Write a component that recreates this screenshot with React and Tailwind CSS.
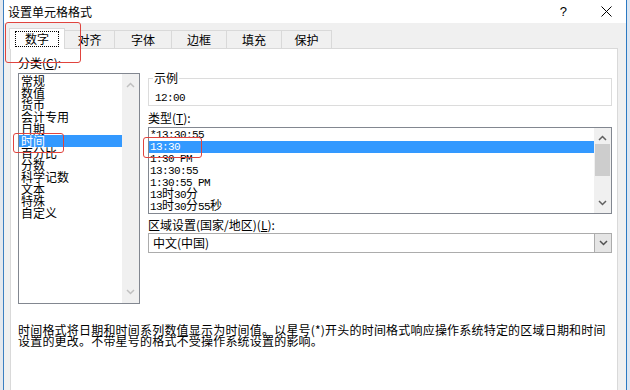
import React from 'react';

const cjk = "font-['Microsoft_YaHei','Noto_Sans_CJK_SC',sans-serif]";
const mono = "font-['Liberation_Mono','Noto_Sans_CJK_SC',monospace]";

const categories = ['常规', '数值', '货币', '会计专用', '日期', '时间', '百分比', '分数', '科学记数', '文本', '特殊', '自定义'];

function Chevron({ up, color = '#606060' }) {
  return (
    <svg width="9" height="6" viewBox="0 0 9 6">
      <polyline
        points={up ? '1,5 4.5,1.5 8,5' : '1,1 4.5,4.5 8,1'}
        fill="none"
        stroke={color}
        strokeWidth="1.5"
      />
    </svg>
  );
}

function Cn({ children }) {
  return <span className="text-[12px] tracking-normal">{children}</span>;
}

const types = [
  <>*13:30:55</>,
  <>13:30</>,
  <>1:30 PM</>,
  <>13:30:55</>,
  <>1:30:55 PM</>,
  <>13<Cn>时</Cn>30<Cn>分</Cn></>,
  <>13<Cn>时</Cn>30<Cn>分</Cn>55<Cn>秒</Cn></>,
];

const tabs = ['对齐', '字体', '边框', '填充', '保护'];
const tabWidths = ['w-[50px]', 'w-[57px]', 'w-[55px]', 'w-[55px]', 'w-[50px]'];

export default function App() {
  return (
    <div className={`w-[630px] h-[390px] flex overflow-hidden relative text-black ${cjk}`}>
      <div className="w-[3px] bg-[#e4e8ee]" />
      <div className="flex-1 flex flex-col bg-[#f0f0f0] border-l border-[#3c7fc1]">
        {/* title bar */}
        <div className="h-[23px] bg-white flex items-center pl-[4px] pr-[14px] text-[12px] leading-[12px]">
          <span>设置单元格格式</span>
          <span className="ml-auto text-[13px] font-['Liberation_Sans',sans-serif]">?</span>
          <svg className="ml-[34px]" width="11" height="11" viewBox="0 0 11 11">
            <path d="M0.5 0.5L10.5 10.5M10.5 0.5L0.5 10.5" stroke="#000" strokeWidth="1" />
          </svg>
        </div>

        {/* tabs */}
        <div className="flex items-end pl-[5px] mt-[5px] h-[20px] text-[12px] leading-[12px]">
          <div className="w-[56px] h-[21px] bg-white border border-[#d9d9d9] border-b-0 flex items-center justify-center relative z-10 -mb-[1px]">
            <span className="px-[9px] py-[1px] border border-dotted border-black">数字</span>
          </div>
          {tabs.map((t, i) => (
            <div
              key={t}
              className={`${tabWidths[i]} h-[18px] border border-[#d9d9d9] border-l-0 border-b-0 bg-[#f0f0f0] flex items-center justify-center`}
            >
              {t}
            </div>
          ))}
        </div>

        {/* panel */}
        <div className="flex-1 ml-[6px] mr-[8px] bg-white border border-[#d9d9d9] border-b-0 flex flex-col text-[12px] leading-[12px]">
          <div className="flex pt-[8px] pl-[7px]">
            {/* left column */}
            <div className="flex flex-col w-[122px]">
              <div className="h-[16px]">
                分类(<span className="underline">C</span>):
              </div>
              <div className="h-[231px] border border-[#828790] flex">
                <div className="flex-1 pt-[1px]">
                  {categories.map((c) => (
                    <div
                      key={c}
                      className={`h-[12px] leading-[12px] pl-[2px] ${c === '时间' ? 'bg-[#3399ff] text-white' : ''}`}
                    >
                      {c}
                    </div>
                  ))}
                </div>
                <div className="w-[17px] bg-[#f0f0f0] flex flex-col items-center justify-between py-[8px]">
                  <Chevron up color="#c0c0c0" />
                  <Chevron color="#c0c0c0" />
                </div>
              </div>
            </div>

            {/* right column */}
            <div className="flex-1 flex flex-col ml-[8px] mr-[5px]">
              <fieldset className="border border-[#dcdcdc] h-[34px] px-[4px] mt-[15px]">
                <legend className="px-[1px] text-[12px] leading-[12px]">示例</legend>
                <div className={`${mono} text-[11px] tracking-[-0.6px] leading-[12px] pl-[2px] pt-[8px]`}>12:00</div>
              </fieldset>
              <div className="mt-[6px] h-[15px]">
                类型(<span className="underline">T</span>):
              </div>
              <div className="h-[87px] border border-[#828790] flex">
                <div className={`flex-1 pt-[1px] ${mono} text-[11px] tracking-[-0.6px]`}>
                  {types.map((t, i) => (
                    <div
                      key={i}
                      className={`h-[12px] leading-[12px] pl-[1px] whitespace-nowrap ${i === 1 ? 'bg-[#3399ff] text-white' : ''}`}
                    >
                      {t}
                    </div>
                  ))}
                </div>
                <div className="w-[17px] bg-[#f0f0f0] flex flex-col items-center py-[7px]">
                  <Chevron up />
                  <div className="w-[15px] h-[32px] bg-[#cdcdcd] mt-[3px]" />
                  <div className="mt-auto">
                    <Chevron />
                  </div>
                </div>
              </div>
              <div className="mt-[5px] h-[14px]">
                区域设置(国家/地区)(<span className="underline">L</span>):
              </div>
              <div className="h-[20px] border border-[#acacac] flex items-center">
                <span className="pl-[4px]">中文(中国)</span>
                <div className="ml-auto w-[17px] h-full bg-[#e5e5e5] border-l border-[#acacac] flex items-center justify-center">
                  <Chevron color="#505050" />
                </div>
              </div>
            </div>
          </div>

          <div className="mt-[20px] pl-[7px] text-[12px] leading-[11px] whitespace-nowrap tracking-[0.2px]">
            <div>时间格式将日期和时间系列数值显示为时间值。以星号(*)开头的时间格式响应操作系统特定的区域日期和时间</div>
            <div>设置的更改。不带星号的格式不受操作系统设置的影响。</div>
          </div>
        </div>
      </div>
      <div className="w-[4px] bg-[#dce6f2] border-l border-[#2b79c2]" />

      {/* annotation boxes */}
      <div className="absolute left-[5px] top-[22px] w-[76px] h-[41px] border-[1.5px] border-[#e0443e] rounded-[3px]" />
      <div className="absolute left-[13px] top-[133px] w-[51px] h-[20px] border-[1.5px] border-[#e0443e] rounded-[3px]" />
      <div className="absolute left-[143px] top-[137px] w-[59px] h-[21px] border-[1.5px] border-[#e0443e] rounded-[3px]" />
    </div>
  );
}
